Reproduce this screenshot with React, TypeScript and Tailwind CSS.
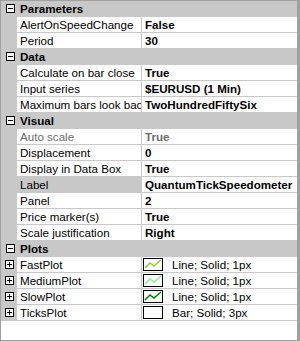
import React from "react";

type Row =
  | { kind: "cat"; label: string }
  | { kind: "prop"; name: string; value: string; disabled?: boolean; selected?: boolean }
  | { kind: "plot"; name: string; value: string; color: string | null };

const rows: Row[] = [
  { kind: "cat", label: "Parameters" },
  { kind: "prop", name: "AlertOnSpeedChange", value: "False" },
  { kind: "prop", name: "Period", value: "30" },
  { kind: "cat", label: "Data" },
  { kind: "prop", name: "Calculate on bar close", value: "True" },
  { kind: "prop", name: "Input series", value: "$EURUSD (1 Min)" },
  { kind: "prop", name: "Maximum bars look back", value: "TwoHundredFiftySix" },
  { kind: "cat", label: "Visual" },
  { kind: "prop", name: "Auto scale", value: "True", disabled: true },
  { kind: "prop", name: "Displacement", value: "0" },
  { kind: "prop", name: "Display in Data Box", value: "True" },
  { kind: "prop", name: "Label", value: "QuantumTickSpeedometer", selected: true },
  { kind: "prop", name: "Panel", value: "2" },
  { kind: "prop", name: "Price marker(s)", value: "True" },
  { kind: "prop", name: "Scale justification", value: "Right" },
  { kind: "cat", label: "Plots" },
  { kind: "plot", name: "FastPlot", value: "Line; Solid; 1px", color: "#9acd32" },
  { kind: "plot", name: "MediumPlot", value: "Line; Solid; 1px", color: "#90ee90" },
  { kind: "plot", name: "SlowPlot", value: "Line; Solid; 1px", color: "#008000" },
  { kind: "plot", name: "TicksPlot", value: "Bar; Solid; 3px", color: null },
];

function ExpandBox({ open }: { open: boolean }) {
  return (
    <svg width="9" height="9" viewBox="0 0 9 9" className="block">
      <rect x="0.5" y="0.5" width="8" height="8" fill="white" stroke="#000" />
      <line x1="2" y1="4.5" x2="7" y2="4.5" stroke="#000" />
      {!open && <line x1="4.5" y1="2" x2="4.5" y2="7" stroke="#000" />}
    </svg>
  );
}

function Swatch({ color }: { color: string | null }) {
  return (
    <svg width="20" height="13" viewBox="0 0 20 13" className="block shrink-0">
      <rect x="0.5" y="0.5" width="19" height="12" fill="white" stroke="#000" />
      {color && (
        <polyline points="2,10 7,5 11,8 18,2" fill="none" stroke={color} strokeWidth="1.5" />
      )}
    </svg>
  );
}

export default function App() {
  return (
    <div
      className="w-[300px] h-[341px] bg-[#f0f0f0] text-[11.6px] leading-none text-black"
      style={{ fontFamily: '"Liberation Sans", Arial, sans-serif' }}
    >
      <div className="w-[300px] h-[341px] bg-white border-t border-l border-b border-r-[3px] border-[#a0a0a0] flex flex-col">
        {rows.map((r, i) => {
          if (r.kind === "cat") {
            return (
              <div key={i} className="h-[16px] shrink-0 bg-[#c8c8c8] flex items-center border-b border-[#c8c8c8]">
                <div className="w-[16px] flex justify-center pl-[4px] pr-[2px]">
                  <ExpandBox open />
                </div>
                <span className="font-bold pl-[3px]">{r.label}</span>
              </div>
            );
          }
          return (
            <div key={i} className="h-[16px] shrink-0 flex border-b border-[#c8c8c8]">
              <div className="w-[16px] shrink-0 bg-[#c8c8c8] flex items-center pl-[4px]">
                {r.kind === "plot" && <ExpandBox open={false} />}
              </div>
              <div
                className={`w-[125px] shrink-0 flex items-center pl-[3px] overflow-hidden whitespace-nowrap border-r border-[#c8c8c8] ${
                  r.kind === "prop" && r.selected ? "bg-[#c8c8c8]" : "bg-white"
                } ${r.kind === "prop" && r.disabled ? "text-[#6d6d6d]" : ""}`}
              >
                {r.name}
              </div>
              {r.kind === "prop" ? (
                <div
                  className={`flex-1 flex items-center pl-[3px] font-bold overflow-hidden whitespace-nowrap ${
                    r.disabled ? "text-[#6d6d6d]" : ""
                  }`}
                >
                  {r.value}
                </div>
              ) : (
                <div className="flex-1 flex items-center pl-[1px] gap-[9px] whitespace-nowrap">
                  <Swatch color={r.color} />
                  <span>{r.value}</span>
                </div>
              )}
            </div>
          );
        })}
      </div>
    </div>
  );
}
